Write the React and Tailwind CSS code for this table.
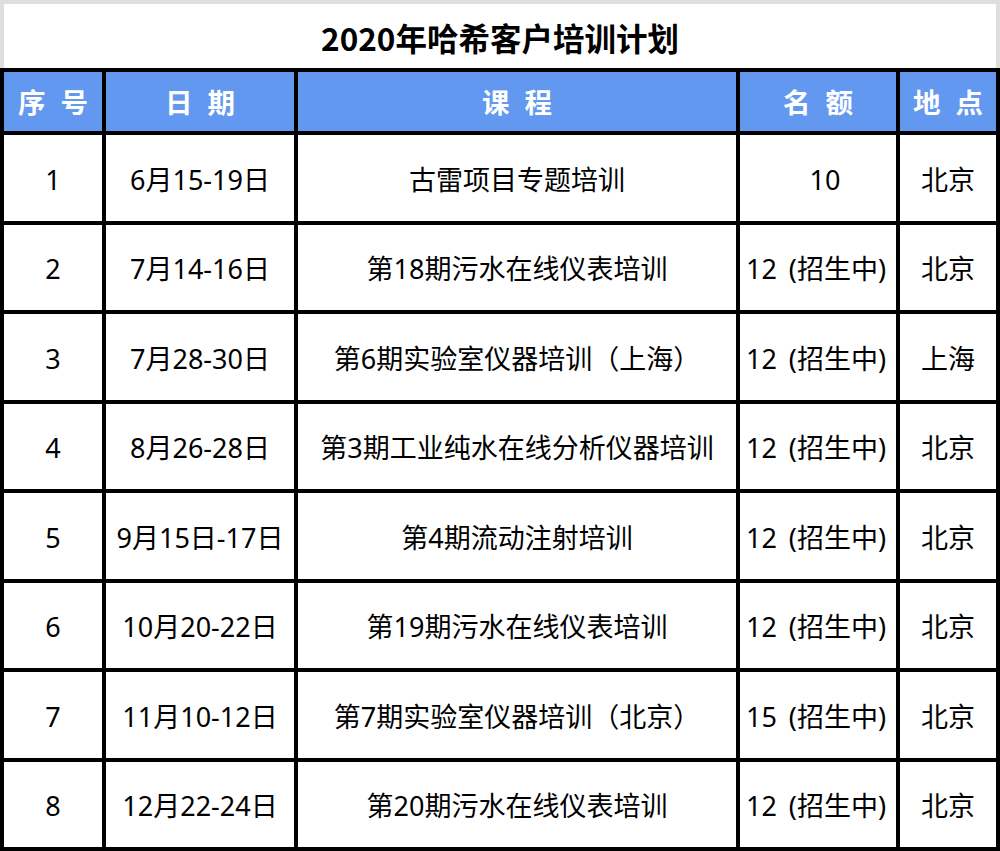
import React from "react";

const rows = [
  ["1", "6月15-19日", "古雷项目专题培训", "10", "北京"],
  ["2", "7月14-16日", "第18期污水在线仪表培训", "12", "北京"],
  ["3", "7月28-30日", "第6期实验室仪器培训（上海）", "12", "上海"],
  ["4", "8月26-28日", "第3期工业纯水在线分析仪器培训", "12", "北京"],
  ["5", "9月15日-17日", "第4期流动注射培训", "12", "北京"],
  ["6", "10月20-22日", "第19期污水在线仪表培训", "12", "北京"],
  ["7", "11月10-12日", "第7期实验室仪器培训（北京）", "15", "北京"],
  ["8", "12月22-24日", "第20期污水在线仪表培训", "12", "北京"],
];

const headers = [
  ["序", "号"],
  ["日", "期"],
  ["课", "程"],
  ["名", "额"],
  ["地", "点"],
];

export default function App() {
  return (
    <div
      className="w-[1000px] h-[851px] bg-white flex flex-col"
      style={{ fontFamily: '"Noto Sans", "Noto Sans CJK SC", sans-serif' }}
    >
      <div className="h-[68px] border-t-4 border-l-4 border-r-4 border-[#dedede] bg-white flex items-center justify-center pt-[3px]">
        <span
          className="text-[31.5px] font-bold text-black leading-none"
          style={{ fontFamily: '"Noto Sans CJK SC", sans-serif' }}
        >
          2020年哈希客户培训计划
        </span>
      </div>
      <div className="flex-1 bg-black p-[4px] grid gap-[4px] grid-cols-[98px_188px_438px_156px_96px] grid-rows-[59px_repeat(8,1fr)]">
        {headers.map((h, i) => (
          <div
            key={i}
            className="bg-[#6298f0] flex items-center justify-center gap-[15px] text-white font-bold text-[27.5px] leading-none"
            style={{ fontFamily: '"Noto Sans CJK SC", sans-serif' }}
          >
            <span>{h[0]}</span>
            <span>{h[1]}</span>
          </div>
        ))}
        {rows.map((r, ri) =>
          r.map((c, ci) => {
            const isQuota = ci === 3;
            return (
              <div
                key={ri + "-" + ci}
                className={
                  "bg-white flex items-center justify-center text-[27px] leading-none text-black whitespace-nowrap pt-[3px]" +
                  (isQuota && ri === 0 ? " pl-[14px]" : "") +
                  (isQuota && ri !== 0 ? " pr-[4px]" : "")
                }
              >
                {isQuota && ri !== 0 ? (
                  <>
                    <span>{c}</span>
                    <span className="inline-block w-[12px]"></span>
                    <span>(招生中)</span>
                  </>
                ) : (
                  c
                )}
              </div>
            );
          })
        )}
      </div>
    </div>
  );
}
